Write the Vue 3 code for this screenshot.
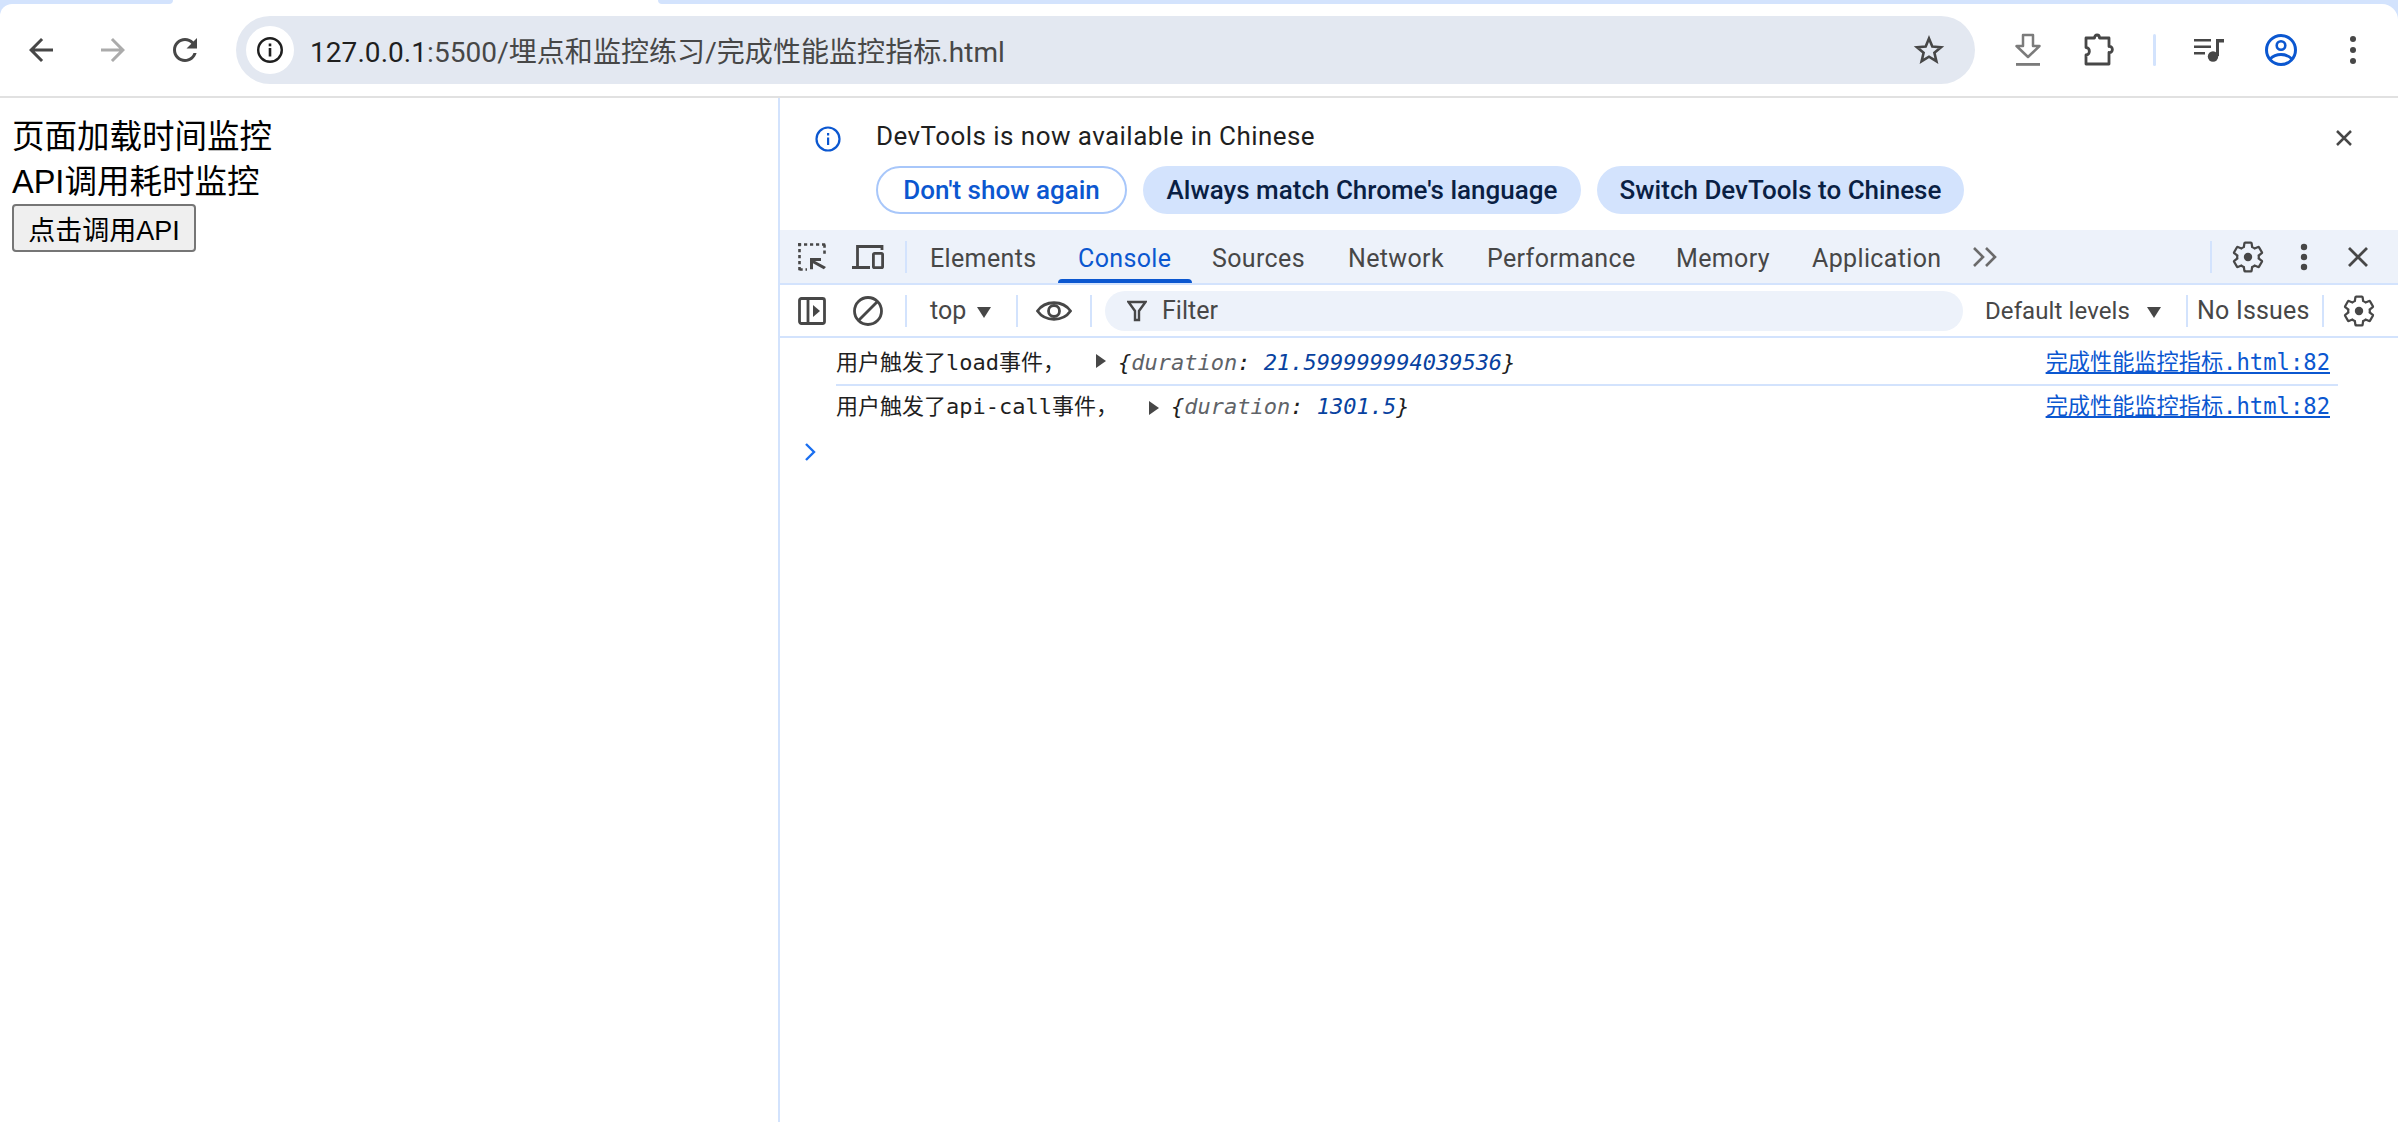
<script setup>
const gear = "M19.14 12.94c.04-.3.06-.61.06-.94 0-.32-.02-.64-.07-.94l2.03-1.58c.18-.14.23-.41.12-.61l-1.92-3.32c-.12-.22-.37-.29-.59-.22l-2.39.96c-.5-.38-1.03-.7-1.62-.94l-.36-2.54c-.04-.24-.24-.41-.48-.41h-3.84c-.24 0-.43.17-.47.41l-.36 2.54c-.59.24-1.13.57-1.62.94l-2.39-.96c-.22-.08-.47 0-.59.22L2.74 8.87c-.12.21-.08.47.12.61l2.03 1.58c-.05.3-.09.63-.09.94s.02.64.07.94l-2.03 1.58c-.18.14-.23.41-.12.61l1.92 3.32c.12.22.37.29.59.22l2.39-.96c.5.38 1.03.7 1.62.94l.36 2.54c.05.24.24.41.48.41h3.84c.24 0 .44-.17.47-.41l.36-2.54c.59-.24 1.13-.56 1.62-.94l2.39.96c.22.08.47 0 .59-.22l1.92-3.32c.12-.22.07-.47-.12-.61l-2.01-1.58z";
const tabs = [
  { name: "Elements", w: 148 },
  { name: "Console", w: 134, active: true },
  { name: "Sources", w: 136 },
  { name: "Network", w: 139 },
  { name: "Performance", w: 189 },
  { name: "Memory", w: 136 },
  { name: "Application", w: 170 },
];
const rows = [
  { msg: "用户触发了load事件，", val: "21.599999994039536" },
  { msg: "用户触发了api-call事件，", val: "1301.5" },
];
</script>

<template>
  <div class="page">
    <header class="chrome">
      <div class="strip">
        <div class="strip-left"></div>
        <div class="strip-tab"></div>
        <div class="strip-right"></div>
      </div>
      <div class="toolbar">
        <div class="nav">
          <svg width="36" height="36" viewBox="0 0 24 24"><path d="M20 11H7.830l5.590-5.590L12 4l-8 8 8 8 1.410-1.410L7.830 13H20v-2z" fill="#474747"/></svg>
        </div>
        <div class="nav">
          <svg width="36" height="36" viewBox="0 0 24 24"><path d="M12 4l-1.410 1.410L16.170 11H4v2h12.170l-5.580 5.590L12 20l8-8z" fill="#ababab"/></svg>
        </div>
        <div class="nav">
          <svg width="36" height="36" viewBox="0 0 24 24"><path d="M17.650 6.350C16.200 4.900 14.210 4 12 4c-4.420 0-7.990 3.580-7.990 8s3.570 8 7.990 8c3.730 0 6.840-2.550 7.730-6h-2.080c-.82 2.330-3.040 4-5.650 4-3.310 0-6-2.690-6-6s2.690-6 6-6c1.660 0 3.140.69 4.220 1.780L13 11h7V4l-2.350 2.350z" fill="#474747"/></svg>
        </div>
        <div class="omnibox">
          <div class="site-info">
            <svg width="28" height="28" viewBox="0 0 28 28"><circle cx="14" cy="14" r="11.800" fill="none" stroke="#1f1f1f" stroke-width="2.400"/><rect x="12.700" y="12" width="2.600" height="8.500" fill="#1f1f1f"/><rect x="12.700" y="7.500" width="2.600" height="2.800" fill="#1f1f1f"/></svg>
          </div>
          <div class="url"><span class="host">127.0.0.1</span><span class="path">:5500/埋点和监控练习/完成性能监控指标.html</span></div>
          <svg class="star" width="32" height="32" viewBox="0 0 32 32"><path d="m16 4.500 3.300 8 8.700.700-6.600 5.600 2 8.400L16 22.700l-7.400 4.500 2-8.400L4 13.200l8.700-.700z" fill="none" stroke="#474747" stroke-width="2.600" stroke-linejoin="miter"/></svg>
        </div>
        <div class="actions">
          <div class="act first">
            <svg width="28" height="36" viewBox="0 0 28 36"><path d="M9 3h10v11h6.500L14 25 2.500 14H9z" fill="none" stroke="#7b7b7b" stroke-width="2.500" stroke-linejoin="round"/><rect x="2" y="31" width="24" height="2.800" fill="#7b7b7b"/></svg>
          </div>
          <div class="act">
            <svg width="34" height="36" viewBox="0 0 34 36"><path d="M3 6h8.500c0-4 5-4 5 0H26v8.500c4.500-.5 4.500 6.500 0 6V32H3v-9c4.500 0 4.500-7.500 0-7.500z" fill="none" stroke="#474747" stroke-width="2.800" stroke-linejoin="round"/></svg>
          </div>
          <div class="act-sep"><span></span></div>
          <div class="act">
            <svg width="32" height="24" viewBox="0 0 32 24"><path d="M1 1h17v2.500H1zM1 7.500h17V10H1zM1 14h11v2.500H1z" fill="#474747"/><path d="M23 1h8v3.500h-5V18h-3z" fill="#474747"/><circle cx="20" cy="18.500" r="5.200" fill="#474747"/></svg>
          </div>
          <div class="act">
            <svg width="34" height="34" viewBox="0 0 34 34"><circle cx="17" cy="17" r="14.500" fill="none" stroke="#0b57d0" stroke-width="3"/><circle cx="17" cy="12.500" r="4.300" fill="none" stroke="#0b57d0" stroke-width="2.600"/><path d="M6 26c6-6 16-6 22 0" fill="none" stroke="#0b57d0" stroke-width="2.800"/></svg>
          </div>
          <div class="act">
            <svg width="8" height="30" viewBox="0 0 8 30"><circle cx="4" cy="4" r="3" fill="#474747"/><circle cx="4" cy="15" r="3" fill="#474747"/><circle cx="4" cy="26" r="3" fill="#474747"/></svg>
          </div>
        </div>
      </div>
    </header>

    <main class="split">
      <section class="viewport">
        <div class="line">页面加载时间监控</div>
        <div class="line">API调用耗时监控</div>
        <button class="demo" type="button">点击调用API</button>
      </section>

      <section class="devtools">
        <div class="infobar">
          <div class="info-row">
            <svg class="info-icon" width="26" height="26" viewBox="0 0 26 26"><circle cx="13" cy="13" r="11.500" fill="none" stroke="#0b57d0" stroke-width="2.200"/><rect x="12" y="11.500" width="2.200" height="7.500" fill="#0b57d0"/><rect x="12" y="7" width="2.200" height="2.500" fill="#0b57d0"/></svg>
            <span class="info-text">DevTools is now available in Chinese</span>
            <svg class="info-close" width="18" height="18" viewBox="0 0 18 18"><path d="m2 2 14 14M16 2 2 16" stroke="#474747" stroke-width="2.500"/></svg>
          </div>
          <div class="info-actions">
            <button class="pill outline" type="button">Don't show again</button>
            <button class="pill tonal" type="button">Always match Chrome's language</button>
            <button class="pill tonal" type="button">Switch DevTools to Chinese</button>
          </div>
        </div>

        <div class="tabbar">
          <div class="dt-btn">
            <svg width="28" height="28" viewBox="0 0 28 28"><path d="M0 1.500h28M1.500 0v28M26.500 1.500V12M1.500 26.500H9" fill="none" stroke="#474747" stroke-width="2.600" stroke-dasharray="3.200 2.800"/><path d="M12 16.500h11v3h-6L28 25.500l-2.200 2.200-10.800-6v6h-3z" fill="#474747" transform="translate(0 -1.500)"/></svg>
          </div>
          <div class="dt-btn">
            <svg width="32" height="24" viewBox="0 0 32 24"><path d="M5.500 21V1.500H30V5" fill="none" stroke="#474747" stroke-width="2.800"/><rect x="0" y="21" width="18" height="3" fill="#474747"/><rect x="21.400" y="8.400" width="9.200" height="14.200" rx="1.200" fill="none" stroke="#474747" stroke-width="2.800"/></svg>
          </div>
          <span class="sep first-sep"></span>
          <div v-for="t in tabs" :key="t.name" class="tab" :class="{ active: t.active }" :style="{ width: t.w + 'px' }">{{ t.name }}</div>
          <svg class="more" width="26" height="22" viewBox="0 0 26 22"><path d="m2 2 9 9-9 9M14 2l9 9-9 9" fill="none" stroke="#6b6b6b" stroke-width="2.600"/></svg>
          <span class="sep right-sep"></span>
          <div class="dt-btn">
            <svg width="36" height="36" viewBox="0 0 24 24"><path :d="gear" fill="none" stroke="#474747" stroke-width="1.500"/><circle cx="12" cy="12" r="2.800" fill="#474747"/></svg>
          </div>
          <div class="dt-btn">
            <svg width="8" height="28" viewBox="0 0 8 28"><circle cx="4" cy="4" r="3.200" fill="#474747"/><circle cx="4" cy="14" r="3.200" fill="#474747"/><circle cx="4" cy="24" r="3.200" fill="#474747"/></svg>
          </div>
          <div class="dt-btn">
            <svg width="22" height="22" viewBox="0 0 22 22"><path d="m2 2 18 18M20 2 2 20" stroke="#474747" stroke-width="2.800"/></svg>
          </div>
        </div>

        <div class="consolebar">
          <div class="dt-btn">
            <svg width="28" height="28" viewBox="0 0 28 28"><rect x="1.500" y="1.500" width="25" height="25" rx="2" fill="none" stroke="#474747" stroke-width="2.800"/><path d="M10 1.500v25" stroke="#474747" stroke-width="2.800"/><path d="M15 8v12l7-6z" fill="#474747"/></svg>
          </div>
          <div class="dt-btn">
            <svg width="32" height="32" viewBox="0 0 32 32"><circle cx="16" cy="16" r="13.500" fill="none" stroke="#474747" stroke-width="2.800"/><path d="M25.500 6.500l-19 19" stroke="#474747" stroke-width="2.800"/></svg>
          </div>
          <span class="sep first-sep"></span>
          <div class="ctx">top<i class="caret"></i></div>
          <span class="sep"></span>
          <div class="eye">
            <svg width="36" height="24" viewBox="0 0 36 24"><path d="M1.500 12C9 1 27 1 34.500 12 27 23 9 23 1.500 12z" fill="none" stroke="#474747" stroke-width="2.800"/><circle cx="18" cy="12" r="5.500" fill="none" stroke="#474747" stroke-width="2.800"/></svg>
          </div>
          <span class="sep"></span>
          <div class="filter">
            <svg width="20" height="24" viewBox="0 0 20 24"><path d="M1.500 3h17L12 12v9H8v-9z" fill="none" stroke="#474747" stroke-width="2.400"/></svg>
            <span>Filter</span>
          </div>
          <div class="levels">Default levels<i class="caret"></i></div>
          <span class="sep"></span>
          <div class="issues">No Issues</div>
          <span class="sep"></span>
          <div class="dt-btn end">
            <svg width="36" height="36" viewBox="0 0 24 24"><path :d="gear" fill="none" stroke="#474747" stroke-width="1.500"/><circle cx="12" cy="12" r="2.800" fill="#474747"/></svg>
          </div>
        </div>

        <div class="log">
          <div v-for="r in rows" :key="r.val" class="row">
            <span>{{ r.msg }}</span>
            <i class="expand"></i>
            <span class="obj">{<span class="key">duration</span>: <span class="num">{{ r.val }}</span>}</span>
            <a class="src">完成性能监控指标.html:82</a>
          </div>
          <div class="prompt">
            <svg width="12" height="20" viewBox="0 0 12 20"><path d="m2 2 8 8-8 8" fill="none" stroke="#1a6ff0" stroke-width="2.400"/></svg>
          </div>
        </div>
      </section>
    </main>
  </div>
</template>

<style scoped>
.page {
  width: 2398px;
  height: 1122px;
  overflow: hidden;
  display: flex;
  flex-direction: column;
  background: #fff;
  font-family: Roboto, "Noto Sans CJK SC", sans-serif;
  color: #1f1f1f;
}
.chrome { background: #d3e3fd; flex: none; }
.strip { display: flex; height: 4px; background: #fff; }
.strip-left { width: 173px; background: #d3e3fd; border-bottom-right-radius: 4px; }
.strip-tab { width: 485px; }
.strip-right { flex: 1; background: #d3e3fd; border-bottom-left-radius: 4px; }
.toolbar {
  height: 92px;
  display: flex;
  align-items: center;
  padding: 0 0 0 5px;
  background: #fff;
  border-bottom: 2px solid #e1e1e1;
  border-top-left-radius: 12px;
  border-top-right-radius: 16px;
}
.nav { width: 72px; display: flex; justify-content: center; }
.omnibox {
  width: 1739px;
  height: 68px;
  margin-left: 15px;
  display: flex;
  align-items: center;
  background: #e3e8f1;
  border-radius: 34px;
  padding-left: 10px;
  padding-right: 30px;
  box-sizing: border-box;
}
.site-info {
  width: 48px;
  height: 48px;
  border-radius: 50%;
  background: #fff;
  display: flex;
  align-items: center;
  justify-content: center;
  flex: none;
}
.url { margin-left: 16px; font-size: 28px; letter-spacing: 0.060px; white-space: nowrap; flex: 1; }
.host { color: #1f1f1f; }
.path { color: #474747; }
.star { flex: none; }
.actions { display: flex; align-items: center; margin-left: 17px; }
.act { width: 72px; display: flex; justify-content: center; align-items: center; }
.act-sep { width: 37px; display: flex; justify-content: center; }
.act-sep span { width: 3px; height: 32px; border-radius: 2px; background: #d3e3fd; }
.split { flex: 1; display: flex; min-height: 0; }
.viewport {
  width: 778px;
  flex: none;
  padding: 16px 0 0 12px;
  box-sizing: border-box;
  font-family: "Liberation Sans", "Noto Sans CJK SC", sans-serif;
  color: #000;
  display: flex;
  flex-direction: column;
  align-items: flex-start;
}
.line { font-size: 32.500px; line-height: 47px; height: 45px; }
.demo {
  width: 184px;
  height: 48px;
  padding: 0;
  font: 27px "Liberation Sans", "Noto Sans CJK SC", sans-serif;
  color: #000;
  background: #efefef;
  border: 2px solid #767676;
  border-radius: 4px;
}
.devtools {
  flex: 1;
  min-width: 0;
  border-left: 2px solid #d3e3fd;
  display: flex;
  flex-direction: column;
}
.infobar { height: 132px; flex: none; box-sizing: border-box; padding-top: 20px; }
.info-row { display: flex; align-items: center; height: 36px; padding-left: 35px; }
.info-icon { position: relative; top: 3px; }
.info-text { margin-left: 35px; font-size: 26px; letter-spacing: 0.440px; }
.info-close { margin-left: auto; margin-right: 45px; position: relative; top: 2px; }
.info-actions { display: flex; gap: 16px; padding: 12px 0 0 96px; }
.pill {
  height: 48px;
  border-radius: 24px;
  padding: 0;
  font: 500 26px Roboto, sans-serif;
  border: none;
  white-space: nowrap;
}
.outline { width: 251px; background: #fff; border: 2px solid #a8c7fa; color: #0b57d0; }
.tonal { background: #d3e3fd; color: #0a1f44; }
.tonal:nth-child(2) { width: 438px; }
.tonal:nth-child(3) { width: 367px; }
.tabbar {
  height: 55px;
  flex: none;
  box-sizing: border-box;
  display: flex;
  align-items: center;
  padding-left: 4px;
  background: #edf2fa;
  border-bottom: 2px solid #d3e3fd;
}
.dt-btn { width: 56px; flex: none; display: flex; align-items: center; justify-content: center; }
.sep { width: 2px; height: 32px; background: #d3e3fd; flex: none; }
.first-sep { margin: 0 3px 0 9px; }
.tab {
  flex: none;
  box-sizing: border-box;
  height: 53px;
  display: flex;
  align-items: center;
  padding: 3px 0 0 20px;
  font-size: 25px;
  letter-spacing: 0.360px;
  color: #474747;
  white-space: nowrap;
}
.tab.active { color: #0b57d0; position: relative; }
.tab.active::after {
  content: "";
  position: absolute;
  left: 0;
  right: 0;
  bottom: 0;
  height: 4px;
  background: #0b57d0;
  border-radius: 4px 4px 0 0;
}
.more { margin-left: 10px; flex: none; }
.right-sep { margin-left: auto; margin-right: 8px; }
.tabbar .dt-btn:last-child { margin-right: 12px; margin-left: -2px; }
.consolebar {
  height: 53px;
  flex: none;
  box-sizing: border-box;
  display: flex;
  align-items: center;
  padding-left: 4px;
  border-bottom: 2px solid #d3e3fd;
  font-size: 25px;
  color: #474747;
}
.ctx { width: 106px; padding-left: 20px; box-sizing: border-box; display: flex; align-items: center; flex: none; }
.caret {
  display: inline-block;
  width: 0;
  height: 0;
  border-left: 7px solid transparent;
  border-right: 7px solid transparent;
  border-top: 11px solid #474747;
  margin-left: 11px;
  margin-top: 4px;
}
.eye { width: 72px; display: flex; justify-content: center; flex: none; }
.filter {
  width: 858px;
  height: 40px;
  margin-left: 13px;
  box-sizing: border-box;
  flex: none;
  display: flex;
  align-items: center;
  gap: 15px;
  padding-left: 22px;
  border-radius: 20px;
  background: #edf2fa;
}
.levels { margin-left: 22px; width: 201px; display: flex; align-items: center; flex: none; white-space: nowrap; font-size: 24px; letter-spacing: 0.100px; }
.levels .caret { margin-left: 17px; }
.issues { margin-left: 9px; width: 125px; white-space: nowrap; flex: none; letter-spacing: 0.200px; }
.dt-btn.end { margin-left: 7px; }
.log {
  flex: 1;
  font: 22px/48px "DejaVu Sans Mono", "Noto Sans CJK SC", monospace;
  color: #1f1f1f;
}
.row {
  height: 48px;
  box-sizing: border-box;
  margin: 0 60px 0 56px;
  padding-right: 8px;
  display: flex;
  align-items: baseline;
  white-space: pre;
  border-bottom: 2px solid #d3e3fd;
}
.row:nth-child(2) { border-bottom: none; height: 44px; line-height: 40px; }
.expand {
  width: 0;
  height: 0;
  border-top: 7px solid transparent;
  border-bottom: 7px solid transparent;
  border-left: 10px solid #474747;
  margin: 0 12px 0 31px;
  flex: none;
  align-self: center;
}
.obj { font-style: italic; color: #1f1f1f; }
.key { color: #5f6368; }
.num { color: #0842a0; }
.src { margin-left: auto; color: #0b57d0; text-decoration: underline; font-size: 22.200px; }
.prompt { margin: 10px 0 0 24px; height: 24px; display: flex; align-items: center; }
</style>

<style>
html, body { margin: 0; padding: 0; background: #fff; }
</style>
